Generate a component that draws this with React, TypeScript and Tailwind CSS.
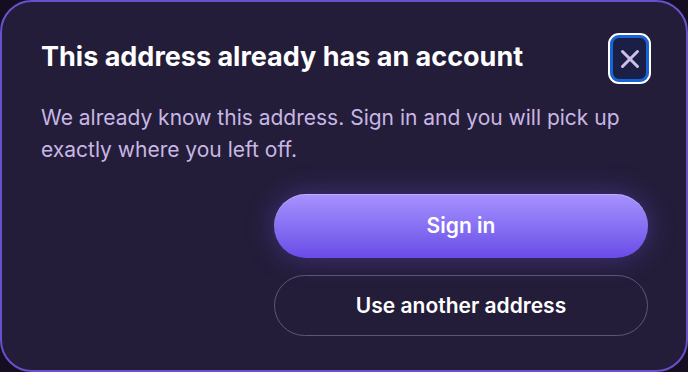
import { X } from "lucide-react";

const App = () => {
  return (
    <div className="w-[688px] h-[372px] bg-[#140e20]" style={{ fontFamily: "Inter, 'Noto Sans', sans-serif" }}>
      <div className="h-full w-full rounded-[32px] border-2 border-[#6a50cf] bg-[#231d39] pl-[39px] pr-[38px] pt-[39px]">
        <div className="flex items-start justify-between">
          <h2 className="text-[27px] leading-8 font-bold text-white">
            This address already has an account
          </h2>
          <button className="mt-[-6px] mr-[-1px] flex h-[47px] w-[39px] items-center justify-center rounded-[9px] border-[3px] border-[#1666d9] bg-[#1b1f45] outline-2 outline-white">
            <X size={30} strokeWidth={2.4} className="text-[#cdbfe8]" />
          </button>
        </div>
        <p className="mt-[20px] w-[614px] text-[21px] leading-8 text-[#c8b7e4]">
          We already know this address. Sign in and you will pick up exactly where you left off.
        </p>
        <div className="mt-[28px] flex flex-col items-end gap-[17px]">
          <button className="h-[64px] w-[374px] rounded-full bg-gradient-to-b from-[#a892ff] to-[#6a4be6] text-[21px] font-semibold text-white shadow-[0_0_28px_rgba(130,90,255,0.35),inset_0_1px_0_rgba(255,255,255,0.25)]">
            Sign in
          </button>
          <button className="h-[61px] w-[374px] rounded-full border-[1.5px] border-[#5f5772] text-[21px] font-semibold text-white">
            Use another address
          </button>
        </div>
      </div>
    </div>
  );
};

export default App;
